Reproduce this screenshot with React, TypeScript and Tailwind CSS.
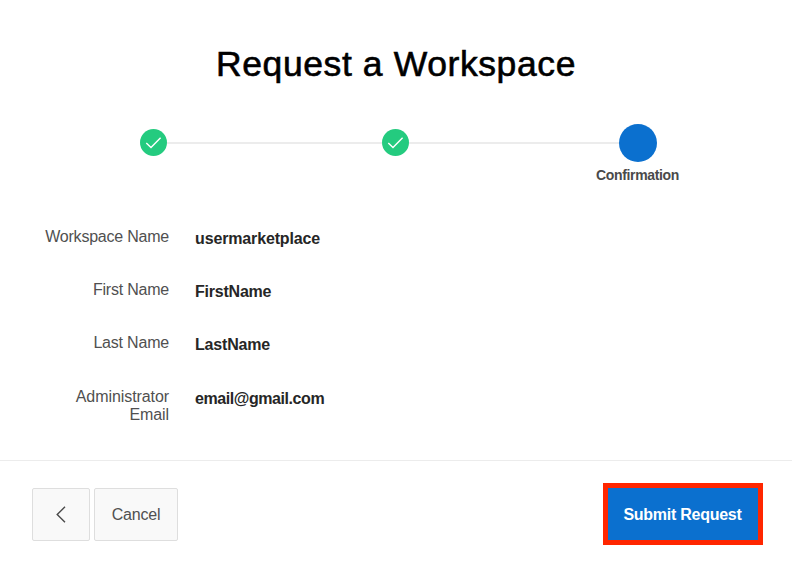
const fields = [
  { label: 'Workspace Name', value: 'usermarketplace', spacing: 'tracking-[-0.14px]', labelSpacing: 'tracking-[-0.22px]' },
  { label: 'First Name', value: 'FirstName', spacing: 'tracking-[-0.22px]', labelSpacing: 'tracking-[-0.22px]' },
  { label: 'Last Name', value: 'LastName', spacing: 'tracking-[-0.18px]', labelSpacing: 'tracking-[-0.2px]' },
  { label: 'Administrator Email', value: 'email@gmail.com', spacing: 'tracking-[-0.43px]', labelSpacing: 'tracking-[-0.08px]' },
];

function CompletedStep() {
  return (
    <div className="flex h-[27px] w-[27px] shrink-0 items-center justify-center rounded-full bg-[#24cb7f]">
      <svg width="27" height="27" viewBox="0 0 27 27" fill="none" stroke="white" strokeWidth="1.4">
        <path d="M6.3 14 L11 18.6 L20.6 8.8" />
      </svg>
    </div>
  );
}

export default function App() {
  return (
    <div className="flex h-[564px] w-[792px] flex-col overflow-hidden bg-white font-['Liberation_Sans',Arial,sans-serif]">
      <h1 className="mt-[44px] h-10 text-center text-[35.5px] leading-10 tracking-[0.6px] text-black [-webkit-text-stroke:0.6px_black]">
        Request a Workspace
      </h1>

      <div className="mt-[40px] flex h-[38px] items-center pl-[139.5px]">
        <div className="-mt-px">
          <CompletedStep />
        </div>
        <div className="h-[2px] w-[215.5px] bg-[#ececec]" />
        <div className="-mt-px">
          <CompletedStep />
        </div>
        <div className="h-[2px] w-[210px] bg-[#ececec]" />
        <div className="h-[38px] w-[38px] shrink-0 rounded-full bg-[#0b70cf]" />
      </div>
      <div className="ml-[537.5px] mt-[4px] w-[200px] text-center text-[14px] font-bold leading-[18px] tracking-[-0.35px] text-[#4a4a4a]">
        Confirmation
      </div>

      <dl className="mt-[44px] flex h-[232px] flex-col">
        {fields.map((f) => (
          <div key={f.label} className="flex h-[53.2px] shrink-0 items-start">
            <dt className={`w-[169px] pl-10 text-right text-[16px] leading-[18px] text-[#505050] ${f.labelSpacing}`}>
              {f.label}
            </dt>
            <dd className={`ml-[26px] mt-[2px] text-[16px] font-bold leading-[18px] text-[#262626] ${f.spacing}`}>
              {f.value}
            </dd>
          </div>
        ))}
      </dl>

      <footer className="flex h-[104px] items-start border-t border-[#ececec] pl-8 pr-[29px] pt-[22px]">
        <button className="mt-[5px] flex h-[53px] w-[58px] items-center justify-center rounded-[2px] border border-[#dedede] bg-[#f9f9f9]">
          <svg width="12" height="18" viewBox="0 0 12 18" fill="none" stroke="#4a4a4a" strokeWidth="1.4">
            <path d="M10 0.8 L2.2 8.5 L10 16.2" />
          </svg>
        </button>
        <button className="ml-1 mt-[5px] h-[53px] w-[84px] rounded-[2px] border border-[#dedede] bg-[#f9f9f9] text-[16px] tracking-[-0.2px] text-[#505050]">
          Cancel
        </button>
        <button className="ml-auto h-[62px] w-[160px] border-[5px] border-[#ff2600] bg-[#0b70cf] pr-px pt-[2px] text-[16px] font-bold tracking-[-0.26px] text-white">
          Submit Request
        </button>
      </footer>
    </div>
  );
}
